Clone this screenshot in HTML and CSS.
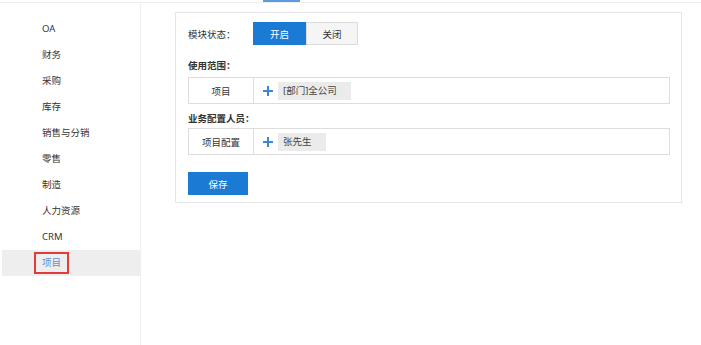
FILE: index.html
```html
<!DOCTYPE html>
<html lang="zh-CN">
<head>
    <meta charset="UTF-8">
    <meta name="viewport" content="width=device-width, initial-scale=1.0">
    <title>项目 - 模块设置</title>
    <link rel="stylesheet" href="styles.css">
</head>
<body>
    <div class="topbar">
        <div class="tab-mark"></div>
    </div>

    <div class="layout">
        <ul class="side-menu">
            <li>OA</li>
            <li>财务</li>
            <li>采购</li>
            <li>库存</li>
            <li>销售与分销</li>
            <li>零售</li>
            <li>制造</li>
            <li>人力资源</li>
            <li>CRM</li>
            <li class="active"><span class="mark">项目</span></li>
        </ul>

        <div class="main">
            <div class="panel">
                <div class="status-row">
                    <div class="status-label">模块状态：</div>
                    <div class="switch">
                        <button class="switch-btn on">开启</button>
                        <button class="switch-btn">关闭</button>
                    </div>
                </div>

                <div class="section-title first">使用范围：</div>
                <div class="field-row">
                    <div class="field-name">项目</div>
                    <div class="field-value">
                        <span class="plus"></span>
                        <span class="tag">[部门]全公司</span>
                    </div>
                </div>

                <div class="section-title">业务配置人员：</div>
                <div class="field-row">
                    <div class="field-name">项目配置</div>
                    <div class="field-value">
                        <span class="plus"></span>
                        <span class="tag">张先生</span>
                    </div>
                </div>

                <button class="save-btn">保存</button>
            </div>
        </div>
    </div>
</body>
</html>
```

FILE: styles.css
```css
* {
    margin: 0;
    padding: 0;
    box-sizing: border-box;
}

body {
    font-family: "Noto Sans", "Noto Sans CJK SC", sans-serif;
    font-size: 9.5px;
    color: #333;
    background: #fff;
    width: 701px;
    height: 345px;
    overflow: hidden;
}

.topbar {
    height: 3px;
    border-bottom: 1px solid #eee;
    padding-left: 263px;
}

.tab-mark {
    width: 37px;
    height: 2px;
    background: #5b9be0;
}

.layout {
    display: flex;
    height: 342px;
}

.side-menu {
    list-style: none;
    width: 139px;
    margin-left: 2px;
    padding-top: 13px;
    border-right: 1px solid #eee;
}

.side-menu li {
    height: 26px;
    line-height: 26px;
    padding-left: 40px;
}

.side-menu li.active {
    background: #eeeeee;
    color: #5b8fd8;
    padding-left: 32px;
    display: flex;
    align-items: center;
}

.mark {
    display: inline-block;
    border: 2px solid #e53a3a;
    line-height: 18px;
    padding: 0 6px;
}

.main {
    flex: 1;
    padding: 9px 0 0 34px;
}

.panel {
    width: 507px;
    height: 191px;
    border: 1px solid #e6e6e6;
    padding: 9px 11px 0 12px;
}

.status-row {
    display: flex;
    align-items: center;
    height: 23px;
}

.status-label {
    width: 65px;
}

.switch {
    display: flex;
}

.switch-btn {
    font: inherit;
    height: 23px;
    width: 52px;
    border: 1px solid #dcdcdc;
    background: #f5f5f5;
    color: #333;
}

.switch-btn.on {
    width: 53px;
    background: #1a7ad4;
    border-color: #1a7ad4;
    color: #fff;
}

.section-title {
    font-weight: bold;
    line-height: 14px;
    margin: 8px 0 2px;
}

.section-title.first {
    margin: 14px 0 4px;
}

.field-row {
    display: flex;
    height: 27px;
    border: 1px solid #dddddd;
}

.field-row:first-of-type {
    height: 26px;
}

.field-name {
    width: 65px;
    border-right: 1px solid #dddddd;
    display: flex;
    align-items: center;
    justify-content: center;
}

.field-value {
    display: flex;
    align-items: center;
    padding-left: 9px;
    gap: 5px;
}

.plus {
    width: 10px;
    height: 10px;
    position: relative;
}

.plus:before,
.plus:after {
    content: "";
    position: absolute;
    background: #3b86d6;
}

.plus:before {
    left: 0;
    top: 4px;
    width: 10px;
    height: 2px;
}

.plus:after {
    left: 4px;
    top: 0;
    width: 2px;
    height: 10px;
}

.tag {
    background: #ebebeb;
    height: 18px;
    line-height: 18px;
    padding: 0 14px 0 5px;
    color: #444;
}

.save-btn {
    font: inherit;
    margin-top: 17px;
    width: 60px;
    height: 23px;
    border: none;
    background: #1a7ad4;
    color: #fff;
}
```
